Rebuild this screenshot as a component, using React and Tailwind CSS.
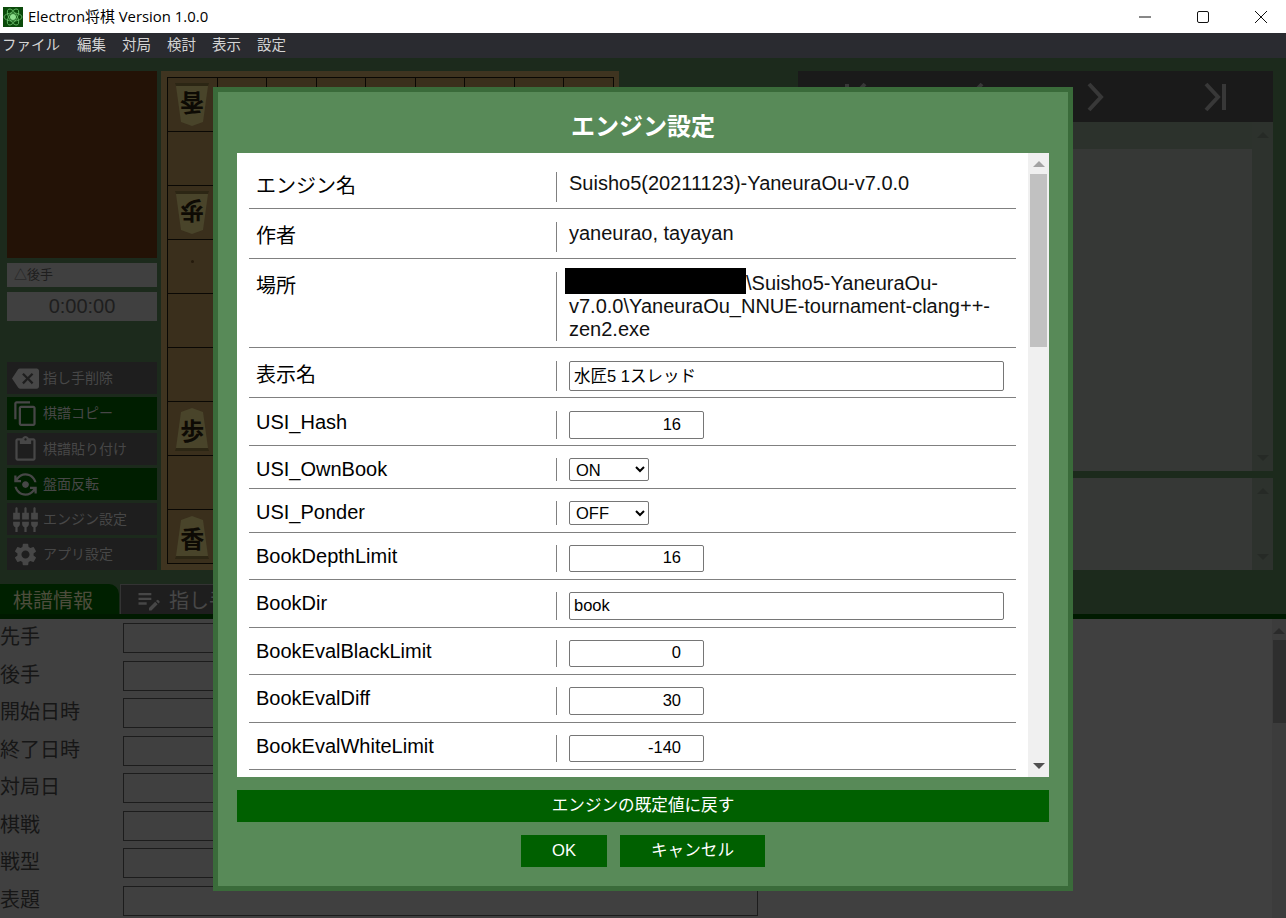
import React from "react";
import { MdBackspace, MdContentCopy, MdContentPaste, MdFlipCameraAndroid, MdSettingsInputComponent, MdSettings, MdEditNote } from "react-icons/md";

const FONT = "font-['Liberation_Sans','Noto_Sans_CJK_JP',sans-serif]";

function Logo() {
  return (
    <svg width="20" height="20" viewBox="0 0 20 20" className="shrink-0">
      <rect width="20" height="20" fill="#0b4a0b" />
      <g fill="none" stroke="#6fc46f" strokeWidth="0.8">
        <ellipse cx="10" cy="10" rx="9" ry="4" />
        <ellipse cx="10" cy="10" rx="9" ry="4" transform="rotate(60 10 10)" />
        <ellipse cx="10" cy="10" rx="9" ry="4" transform="rotate(120 10 10)" />
      </g>
      <circle cx="10" cy="10" r="3" fill="#8fe08f" />
    </svg>
  );
}

function Piece({ ch, flip }) {
  return (
    <div className={`relative w-[34px] h-[44px] ${flip ? "rotate-180" : ""}`}>
      <svg width="34" height="44" viewBox="0 0 34 44" className="absolute inset-0">
        <polygon points="17,1 28,5 33,41 1,41 6,5" fill="#49442a" />
        <polygon points="1,41 33,41 34,44 0,44" fill="#2c2614" />
      </svg>
      <span className="absolute inset-0 flex items-center justify-center pt-[2px] text-[24px] font-bold text-[#0d0a04] font-['Noto_Sans_CJK_JP',sans-serif]">{ch}</span>
    </div>
  );
}

const boardMap = {
  "0-0": ["香", true],
  "2-0": ["歩", true],
  "6-0": ["歩", false],
  "8-0": ["香", false],
};

function Board() {
  const cells = [];
  for (let r = 0; r < 9; r++) {
    for (let c = 0; c < 9; c++) {
      const p = boardMap[`${r}-${c}`];
      cells.push(
        <div key={`${r}-${c}`} className="relative flex items-center justify-center border-r border-b border-[#0a0804]">
          {p && <Piece ch={p[0]} flip={p[1]} />}
          {r === 3 && c === 0 && <span className="w-[3px] h-[3px] rounded-full bg-[#241a0c] -mt-[10px]" />}
        </div>
      );
    }
  }
  return (
    <div className="w-[458px] h-[499px] ml-[4px] bg-[#3f3420] p-[6px]">
      <div className="grid grid-cols-9 grid-rows-9 w-[447px] h-[487px] border-l border-t border-[#0a0804] bg-[#3a2f1c]">
        {cells}
      </div>
    </div>
  );
}

const sideButtons = [
  { icon: MdBackspace, label: "指し手削除", green: false, h: "h-[32px]" },
  { icon: MdContentCopy, label: "棋譜コピー", green: true, h: "h-[33px]" },
  { icon: MdContentPaste, label: "棋譜貼り付け", green: false, h: "h-[32px]" },
  { icon: MdFlipCameraAndroid, label: "盤面反転", green: true, h: "h-[32px]" },
  { icon: MdSettingsInputComponent, label: "エンジン設定", green: false, h: "h-[32px]" },
  { icon: MdSettings, label: "アプリ設定", green: false, h: "h-[32px]" },
];

function LeftColumn() {
  return (
    <div className="w-[150px] flex flex-col">
      <div className="h-[187px] bg-[#231206]" />
      <div className="h-[24px] mt-[5px] bg-[#404040] text-[#1e1e1e] text-[13px] flex items-center pl-[7px]">△後手</div>
      <div className="h-[29px] mt-[5px] bg-[#404040] text-[#1e1e1e] text-[20px] flex items-center justify-center pb-[2px]">0:00:00</div>
      <div className="mt-[41px] flex flex-col gap-[3px]">
        {sideButtons.map((b) => {
          const Icon = b.icon;
          return (
            <div key={b.label} className={`${b.h} ${b.green ? "bg-[#001e00]" : "bg-[#1e1e1e]"} flex items-center text-[14px] text-[#474747]`}>
              <span className="w-[36px] flex justify-center"><Icon size={27} color="#474747" /></span>
              <span>{b.label}</span>
            </div>
          );
        })}
      </div>
    </div>
  );
}

function ScrollArrow({ down, color = "#262a26" }) {
  return (
    <svg width="12" height="6" viewBox="0 0 12 6">
      <polygon points={down ? "0,0 12,0 6,6" : "0,6 12,6 6,0"} fill={color} />
    </svg>
  );
}

function NavIcon({ d }) {
  return (
    <div className="flex-1 flex items-center justify-center">
      <svg width="36" height="36" viewBox="0 0 36 36" fill="none" stroke="#383838" strokeWidth="4">
        <path d={d} />
      </svg>
    </div>
  );
}

function ListBox({ className, header }) {
  return (
    <div className={`flex bg-[#363836] ${className}`}>
      <div className="flex-1 flex flex-col">
        {header && <div className="h-[27px] bg-[#2c322c]" />}
      </div>
      <div className="w-[21px] bg-[#2d322d] flex flex-col items-center justify-between py-[10px]">
        <ScrollArrow />
        <ScrollArrow down />
      </div>
    </div>
  );
}

function RightColumn() {
  return (
    <div className="w-[475px] ml-[179px] flex flex-col">
      <div className="h-[51px] bg-[#1a1a1a] flex">
        <NavIcon d="M8 5V31M26 5L14 18L26 31" />
        <NavIcon d="M24 5L12 18L24 31" />
        <NavIcon d="M12 5L24 18L12 31" />
        <NavIcon d="M10 5L22 18L10 31M28 5V31" />
      </div>
      <ListBox header className="h-[349px]" />
      <ListBox className="h-[92px] mt-[7px]" />
    </div>
  );
}

const recordFields = ["先手", "後手", "開始日時", "終了日時", "対局日", "棋戦", "戦型", "表題"];

function BottomPanel() {
  return (
    <div className="flex-1 flex bg-[#404040] min-h-0 overflow-hidden">
      <div className="flex-1 pt-[4px] flex flex-col gap-[7.5px]">
        {recordFields.map((f) => (
          <div key={f} className="flex items-center h-[30px] text-[20px] text-[#161616]">
            <span className="w-[123px] shrink-0 -mt-[2px]">{f}</span>
            <div className="w-[635px] h-[30px] border border-[#1c1c1c] bg-[#404040]" />
          </div>
        ))}
      </div>
      <div className="w-[14px] bg-[#3c3c3c] flex flex-col items-center pt-[9px]">
        <ScrollArrow color="#2a2a2a" />
        <div className="w-full h-[83px] mt-[6px] ml-[1px] bg-[#2e2e2e]" />
      </div>
    </div>
  );
}

const field = "border border-[#767676] rounded-[2px] bg-white text-black text-[16.5px] outline-none";

function Row({ label, h, cjk, tight, children }) {
  return (
    <div className={`mx-[12px] border-b border-[#808080] flex ${tight ? "pt-[12px] pb-[7px]" : "pt-[13px] pb-[6px]"}`}>
      <div className={`w-[307px] pl-[7px] text-[20px] leading-[23px] text-black shrink-0 ${cjk ? "pt-[3px]" : ""}`}>{label}</div>
      <div style={{ height: h }} className="border-l border-[#808080] pl-[12px] flex-1 text-[20px] leading-[23px] text-[#111]">
        {children}
      </div>
    </div>
  );
}

function TextField({ value }) {
  return <input readOnly value={value} className={`${field} block w-[435px] h-full px-[4px] pb-[2px]`} />;
}
function NumField({ value }) {
  return <input readOnly value={value} className={`${field} block w-[135px] h-full text-right pr-[22px] pb-[2px]`} />;
}
function SelectField({ value }) {
  return (
    <select defaultValue={value} className={`${field} block w-[80px] h-full pl-[2px]`}>
      <option>ON</option>
      <option>OFF</option>
    </select>
  );
}

function Dialog() {
  return (
    <div className={`absolute left-[213px] top-[87px] w-[860px] h-[804px] border-[5px] border-[#3a6b3a] bg-[#588a58] flex flex-col items-center ${FONT}`}>
      <div className="h-[61px] flex items-center justify-center text-white font-bold text-[24px] pt-[9px]">エンジン設定</div>
      <div className="w-[812px] h-[624px] bg-white flex shrink-0">
        <div className="flex-1 overflow-hidden pt-[6px] min-w-0">
          <Row label="エンジン名" cjk h={30}>Suisho5(20211123)-YaneuraOu-v7.0.0</Row>
          <Row label="作者" cjk h={30}>yaneurao, tayayan</Row>
          <Row label="場所" cjk h={69}>
            <span className="inline-block w-[181px] h-[26px] bg-black -ml-[4px] -mb-[5px] -mt-[4px] align-top" />
            \Suisho5-YaneuraOu-v7.0.0\YaneuraOu_NNUE-tournament-clang++-zen2.exe
          </Row>
          <Row label="表示名" cjk h={30}><TextField value="水匠5 1スレッド" /></Row>
          <Row label="USI_Hash" h={28}><NumField value="16" /></Row>
          <Row label="USI_OwnBook" tight h={23}><SelectField value="ON" /></Row>
          <Row label="USI_Ponder" tight h={24}><SelectField value="OFF" /></Row>
          <Row label="BookDepthLimit" tight h={27}><NumField value="16" /></Row>
          <Row label="BookDir" tight h={28}><TextField value="book" /></Row>
          <Row label="BookEvalBlackLimit" tight h={27}><NumField value="0" /></Row>
          <Row label="BookEvalDiff" tight h={28}><NumField value="30" /></Row>
          <Row label="BookEvalWhiteLimit" tight h={27}><NumField value="-140" /></Row>
        </div>
        <div className="w-[21px] bg-[#f0f0f0] flex flex-col items-center shrink-0 relative">
          <div className="mt-[8px]"><ScrollArrow color="#a3a3a3" /></div>
          <div className="w-[17px] h-[173px] mt-[7px] bg-[#c1c1c1]" />
          <div className="mt-auto mb-[8px]"><ScrollArrow down color="#505050" /></div>
        </div>
      </div>
      <button className="w-[812px] h-[32px] mt-[13px] pt-[1px] bg-[#006000] text-white text-[16.6px] shrink-0">エンジンの既定値に戻す</button>
      <div className="flex gap-[13px] mt-[13px]">
        <button className="w-[86px] h-[32px] pt-[1px] bg-[#006000] text-white text-[16.6px]">OK</button>
        <button className="w-[145px] h-[32px] pt-[1px] bg-[#006000] text-white text-[16.6px]">キャンセル</button>
      </div>
    </div>
  );
}

export default function App() {
  return (
    <div className={`relative w-[1286px] h-[918px] overflow-hidden flex flex-col bg-[#1c2a1c] ${FONT}`}>
      <div className="h-[33px] bg-white flex items-center shrink-0 pl-[3px]">
        <Logo />
        <span className="ml-[5px] text-[14.9px] text-black font-['Open_Sans','Noto_Sans_CJK_JP',sans-serif]">Electron将棋 Version 1.0.0</span>
        <div className="ml-auto flex items-center pr-[19px] gap-[46px]">
          <svg width="12" height="12" viewBox="0 0 12 12"><path d="M0 6H12" stroke="#111" strokeWidth="1" /></svg>
          <svg width="12" height="12" viewBox="0 0 12 12"><rect x="0.5" y="0.5" width="11" height="11" rx="1.5" fill="none" stroke="#111" strokeWidth="1" /></svg>
          <svg width="12" height="12" viewBox="0 0 12 12"><path d="M0 0L12 12M12 0L0 12" stroke="#111" strokeWidth="1" /></svg>
        </div>
      </div>
      <div className="h-[25px] bg-[#2a2b30] flex items-center gap-[16px] pl-[2px] text-[14.5px] text-[#d4d4d4] shrink-0">
        {["ファイル", "編集", "対局", "検討", "表示", "設定"].map((m, i) => <span key={m} className={i === 0 ? "mr-[1px]" : ""}>{m}</span>)}
      </div>
      <div className="h-[526px] shrink-0 flex pt-[13px] pl-[7px]">
        <LeftColumn />
        <Board />
        <RightColumn />
      </div>
      <div className="h-[30px] shrink-0 flex items-end">
        <div className="w-[119px] h-[30px] bg-[#002000] rounded-tr-[10px] flex items-center pl-[13px] pt-[3px] text-[20px] text-[#4d4d3c]">棋譜情報</div>
        <div className="w-[200px] h-[30px] ml-[1px] bg-[#1e1e1e] border-t border-l border-[#333] flex items-center pl-[14px] gap-[6px] text-[20px] text-[#474747]">
          <MdEditNote size={28} color="#474747" />
          <span className="pt-[3px]">指し手</span>
        </div>
      </div>
      <div className="h-[5px] bg-[#001a00] shrink-0" />
      <BottomPanel />
      <Dialog />
    </div>
  );
}
